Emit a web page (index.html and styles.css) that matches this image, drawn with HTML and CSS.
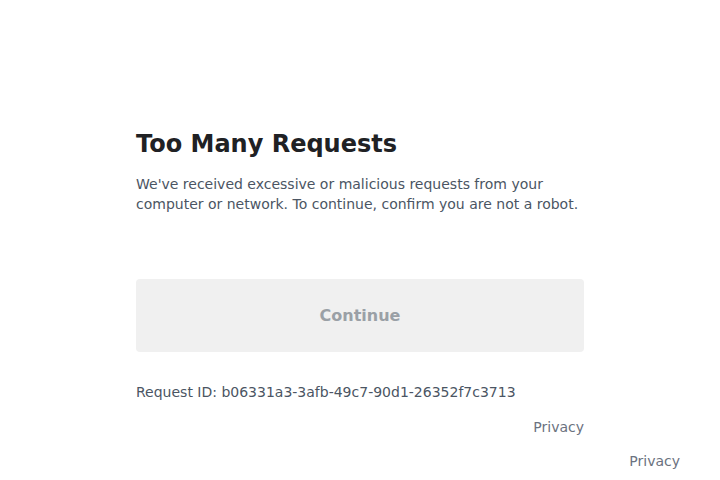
FILE: index.html
```html
<!DOCTYPE html>
<html lang="en">
<head>
<meta charset="utf-8">
<title>Too Many Requests</title>
<link rel="stylesheet" href="styles.css">
</head>
<body>
<main class="page">
  <section class="card">
    <h1 class="title">Too Many Requests</h1>
    <p class="lead">We've received excessive or malicious requests from your computer or network. To continue, confirm you are not a robot.</p>
    <button class="continue" type="button" disabled>Continue</button>
    <p class="request-id">Request ID: b06331a3-3afb-49c7-90d1-26352f7c3713</p>
    <div class="card-footer"><a class="privacy" href="#">Privacy</a></div>
  </section>
  <footer class="page-footer"><a class="privacy" href="#">Privacy</a></footer>
</main>
</body>
</html>
```

FILE: styles.css
```css
html, body {
  margin: 0;
  padding: 0;
  background: #ffffff;
}
body {
  font-family: "DejaVu Sans", sans-serif;
  color: #1f1f1f;
}
.page {
  display: flex;
  flex-direction: column;
  padding-top: 128px;
}
.card {
  width: 448px;
  margin: 0 auto;
  display: flex;
  flex-direction: column;
}
.title {
  margin: 0;
  font-size: 24px;
  line-height: 32px;
  font-weight: bold;
  color: #202124;
}
.lead {
  margin: 14px 0 0;
  font-size: 14px;
  line-height: 20px;
  color: #4b5563;
}
.continue {
  margin-top: 65px;
  height: 73px;
  border: none;
  border-radius: 4px;
  background: #f0f0f0;
  color: #9aa0a6;
  font-family: "DejaVu Sans", sans-serif;
  font-size: 16px;
  font-weight: bold;
  padding: 0;
}
.request-id {
  margin: 30px 0 0;
  font-size: 14px;
  line-height: 20px;
  color: #4b5563;
}
.card-footer {
  margin-top: 15px;
  display: flex;
  justify-content: flex-end;
}
.privacy {
  font-size: 14px;
  line-height: 20px;
  color: #6b7280;
  text-decoration: none;
}
.page-footer {
  margin-top: 14px;
  padding-right: 40px;
  display: flex;
  justify-content: flex-end;
}
```
